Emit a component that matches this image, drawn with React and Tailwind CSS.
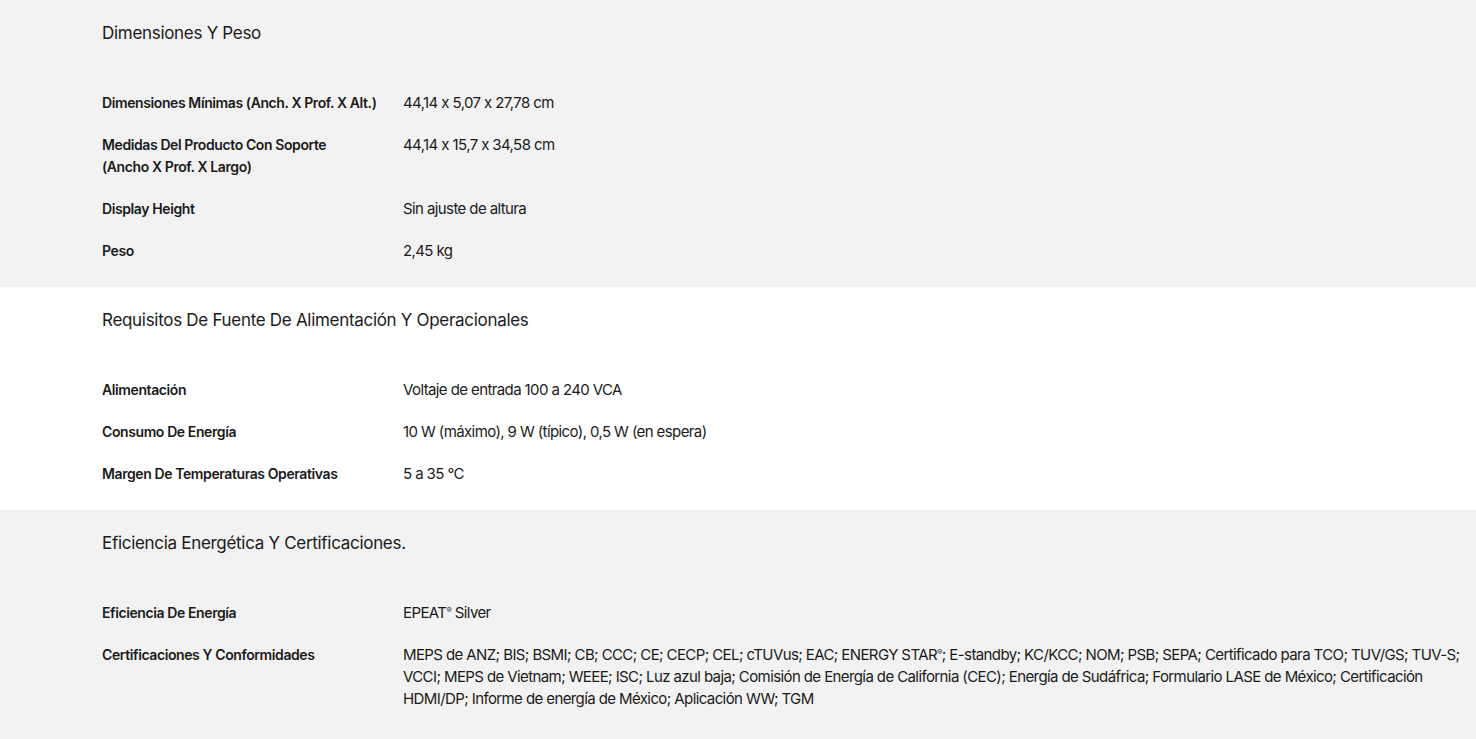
import React from 'react';

const sections = [
  {
    title: 'Dimensiones Y Peso',
    bg: 'bg-[#f2f2f2]',
    rows: [
      ['Dimensiones Mínimas (Anch. X Prof. X Alt.)', '44,14 x 5,07 x 27,78 cm'],
      ['Medidas Del Producto Con Soporte\n(Ancho X Prof. X Largo)', '44,14 x 15,7 x 34,58 cm'],
      ['Display Height', 'Sin ajuste de altura'],
      ['Peso', '2,45 kg'],
    ],
  },
  {
    title: 'Requisitos De Fuente De Alimentación Y Operacionales',
    bg: 'bg-white',
    rows: [
      ['Alimentación', 'Voltaje de entrada 100 a 240 VCA'],
      ['Consumo De Energía', '10 W (máximo), 9 W (típico), 0,5 W (en espera)'],
      ['Margen De Temperaturas Operativas', '5 a 35 °C'],
    ],
  },
  {
    title: 'Eficiencia Energética Y Certificaciones.',
    bg: 'bg-[#f2f2f2]',
    rows: [
      ['Eficiencia De Energía', 'EPEAT® Silver'],
      [
        'Certificaciones Y Conformidades',
        'MEPS de ANZ; BIS; BSMI; CB; CCC; CE; CECP; CEL; cTUVus; EAC; ENERGY STAR®; E-standby; KC/KCC; NOM; PSB; SEPA; Certificado para TCO; TUV/GS; TUV-S; VCCI; MEPS de Vietnam; WEEE; ISC; Luz azul baja; Comisión de Energía de California (CEC); Energía de Sudáfrica; Formulario LASE de México; Certificación HDMI/DP; Informe de energía de México; Aplicación WW; TGM',
      ],
    ],
  },
];

// small raised ® like the reference
const withReg = (text) =>
  text.split('®').map((part, i, arr) => (
    <React.Fragment key={i}>
      {part}
      {i < arr.length - 1 && <span className="text-[8px] leading-none align-[5px]">®</span>}
    </React.Fragment>
  ));

export default function App() {
  return (
    <div className="min-h-screen bg-[#f2f2f2] text-[#1a1a1a]" style={{ fontFamily: "Inter, 'Noto Sans', sans-serif" }}>
      {sections.map((s) => (
        <section key={s.title} className={`${s.bg} pt-[21px] pb-[25px] pl-[102px] pr-[4px]`}>
          <h2 className="text-[17px] leading-6 tracking-[-0.3px] font-normal">{s.title}</h2>
          <div className="mt-[47px] flex flex-col gap-5">
            {s.rows.map(([label, value]) => (
              <div key={label} className="flex">
                <div className="w-[301px] shrink-0 pr-[10px] text-[14px] leading-[22px] font-semibold tracking-[-0.4px] whitespace-pre-line">
                  {label}
                </div>
                <div className="flex-1 text-[15px] leading-[22px] tracking-[-0.6px]">{withReg(value)}</div>
              </div>
            ))}
          </div>
        </section>
      ))}
    </div>
  );
}
